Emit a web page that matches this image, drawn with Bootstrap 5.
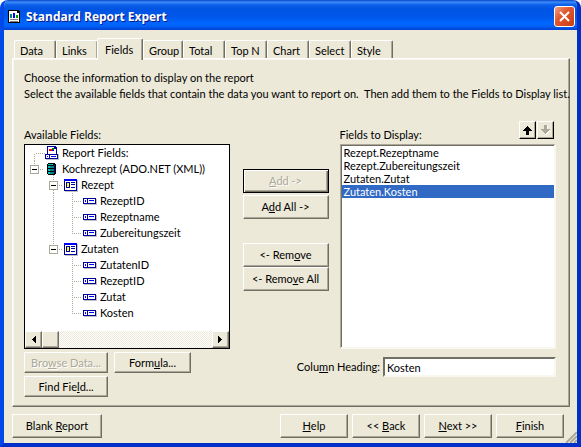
<!DOCTYPE html>
<html lang="en">
<head>
<meta charset="utf-8">
<meta name="viewport" content="width=device-width, initial-scale=1">
<title>Standard Report Expert</title>
<link href="https://cdn.jsdelivr.net/npm/bootstrap@5.3.0/dist/css/bootstrap.min.css" rel="stylesheet">
<style>
:root { --face:#ece9d8; --shade:#aca899; --dark:#716f64; --pick:#316ac5; }
body { font-family:Lato,"Liberation Sans",Arial,sans-serif; font-size:11px; line-height:16px; color:#000; background:#fff; }
.win { min-height:100vh; border:solid; border-width:0 4px 4px; border-color:#0048e8 #0030c8 #0030c8 #0048e8; border-radius:8px 8px 0 0; background:var(--face); overflow:hidden; }
.titlebar { height:30px; margin:0 -4px; padding:3px 6px 0 8px; background:linear-gradient(#0842c8 0,#3b8cf8 2px,#0a5ee8 5px,#0054e3 9px,#0056e8 16px,#0066ff 23px,#0062f8 26px,#003fd0 30px); }
.titlebar h1 { font-family:"Open Sans","Trebuchet MS",sans-serif; font-size:12px; line-height:20px; font-weight:700; color:#fff; text-shadow:1px 1px #0a1883; padding-left:6px; }
.close-btn { width:21px; height:21px; border:1px solid #fff; border-radius:3px; background:linear-gradient(135deg,#f0a088,#e25830 40%,#c83c10); line-height:0; }
.client { padding:8px 7px 5px 8px; }
.nav-tabs { --bs-nav-tabs-border-width:0px; padding-left:2px; height:20px; position:relative; z-index:1; }
.nav-tabs .nav-link { width:42px; height:18px; padding:0 0 0 5px; margin:0; text-align:left; line-height:19px; color:#000; background:var(--face); border:solid; border-width:1px 1px 0 1px; border-color:#fff var(--dark) #fff #fff; border-radius:2px 2px 0 0; box-shadow:inset -1px 0 var(--shade); white-space:nowrap; }
.nav-tabs .nav-link:hover { border-color:#fff var(--dark) #fff #fff; }
.nav-tabs .nav-link.active { width:46px; height:22px; margin-bottom:-2px; margin-left:-1px; padding-left:7px; line-height:19px; color:#000; background:var(--face); border-color:#fff var(--dark) #fff #fff; }
.nav-tabs .nav-link.short { width:40px; }
.sheet { border:1px solid; border-color:#fff var(--dark) var(--dark) #fff; box-shadow:inset -1px -1px var(--shade),inset 1px 1px #f8f7f0; padding:11px 13px 9px 11px; }
.columns { gap:11px; padding-top:19px; }
.col-tree { flex:206 1 0; min-width:0; padding-top:6px; }
.col-move { flex:0 0 86px; padding-top:48px; margin-left:2px; }
.col-list { flex:217 1 0; min-width:0; }
.list-head { height:23px; padding-right:2px; gap:1px; }
.list-head span { padding-top:6px; }
.face-btn { font-size:11px; line-height:16px; color:#000; background:var(--face); border:1px solid; border-color:#fff var(--dark) var(--dark) #fff; box-shadow:inset -1px -1px var(--shade); border-radius:0; padding:0 4px; height:24px; white-space:nowrap; }
.face-btn:hover { color:#000; background:#f1efe2; border-color:#fff var(--dark) var(--dark) #fff; }
.face-btn:disabled { color:var(--shade); text-shadow:1px 1px #fff; background:var(--face); border-color:#fff var(--dark) var(--dark) #fff; opacity:1; }
.face-btn.default-btn { border-color:#000; box-shadow:inset 1px 1px #fff,inset -1px -1px var(--dark),inset -2px -2px var(--shade); }
.face-btn u, label u { text-underline-offset:1px; text-decoration-thickness:1px; }
.stack { gap:2px; }
.low { height:21px; }
.under-tree { gap:6px; padding:3px 0; }
.w-a { width:84px; } .w-b { width:77px; } .w-c { width:90px; } .w-d { width:68px; }
.arrow-btn { width:17px; height:18px; padding:0; border:1px solid; border-color:#fff #000 #000 #fff; background:var(--face); box-shadow:inset -1px -1px var(--shade); line-height:0; }
.tree { background:#fff; border:1px solid #000; margin-top:1px; }
.tree li { height:16px; display:flex; white-space:nowrap; }
.tree li svg { flex:none; }
svg { display:block; shape-rendering:crispEdges; }
.hbar { height:17px; background:repeating-conic-gradient(#fff 0 25%,var(--face) 0 50%) 0 0/2px 2px; }
.hbar button, .hbar span { width:17px; height:17px; padding:0; border:1px solid; border-color:#fff var(--dark) var(--dark) #fff; box-shadow:inset -1px -1px var(--shade); background:var(--face); }
.chosen { background:#fff; border:solid; border-color:var(--shade) #f8f7f0 #f8f7f0 var(--shade); box-shadow:inset 1px 1px var(--dark); padding:1px 0 0 1px; border-width:1px 2px 2px 1px; }
.chosen .list-group-item { padding:0 2px; border:0; font-size:11px; line-height:13px; height:13px; color:#000; background:transparent; border-radius:0; }
.chosen .list-group-item.active { margin:0; color:#fff; background:var(--pick); }
.heading-row { padding-top:8px; height:48px; }
.heading-box { flex:0 0 173px; height:20px; min-height:0; min-width:0; padding:0 2px; border:2px solid; border-color:var(--dark) #f8f7f0 #f8f7f0 var(--dark); border-radius:0; font-size:11px; line-height:16px; color:#000; background:#fff; }
.heading-row label { padding-top:2px; margin-right:3px; }
.foot { padding:7px 6px 0 0; }
.grip { position:absolute; right:0; bottom:0; }
</style>
<script src="https://cdn.jsdelivr.net/npm/bootstrap@5.3.0/dist/js/bootstrap.bundle.min.js"></script>
</head>
<body>
<svg width="0" height="0" class="position-absolute" aria-hidden="true">
  <symbol id="fieldIcon" viewBox="0 0 14 7"><path d="M1 6h12V1h1v6H1z" fill="#c0c0c0"/><path d="M0 0h13v6H0z" fill="#0000a0"/><path d="M1 1h3v4H1zM5 1h7v4H5z" fill="#fff"/><path d="M2 2h1v2H2zM6 2h5v1H6z" fill="#0000ff"/></symbol>
  <symbol id="tableIcon" viewBox="0 0 14 13"><path d="M1 12h12V1h1v12H1z" fill="#c0c0c0"/><path d="M0 0h13v12H0z" fill="#0000a0"/><path d="M0 0h13v2H0z" fill="#0000ff"/><path d="M1 2h11v9H1z" fill="#fff"/><path d="M2 3h4v6H2zM7 3h4v1H7zM7 5h4v1H7zM7 8h4v1H7z" fill="#0000a0"/><path d="M3 4h2v4H3z" fill="#ffff00"/></symbol>
  <symbol id="minusBox" viewBox="0 0 9 9"><path d="M.5 .5h8v8h-8z" fill="#fff" stroke="#aca899"/><path d="M2 4h5v1H2z" fill="#000"/></symbol>
  <symbol id="leafRow" viewBox="0 0 75 16"><path d="M47.500 0v9M49 8.500h7" stroke="#aca899" stroke-dasharray="1 1"/><use href="#fieldIcon" x="58" y="5" width="14" height="7"/></symbol>
</svg>
<main class="win d-flex flex-column">
  <header class="titlebar d-flex align-items-center">
    <svg width="12" height="13" aria-hidden="true"><path d="M0 0h10l2 2v11H0z" fill="#000"/><path d="M1 1h8v2h2v9H1z" fill="#fff"/><path d="M2 4h2v4H2z" fill="#008080"/><path d="M5 3h2v5H5z" fill="#0000ff"/><path d="M8 5h2v3H8z" fill="#00a000"/><path d="M2 9h8v1H2zM2 11h8v1H2z" fill="#808080"/></svg>
    <h1 class="m-0 flex-grow-1">Standard Report Expert</h1>
    <button class="close-btn d-flex align-items-center justify-content-center p-0" aria-label="Close"><svg width="11" height="11" style="shape-rendering:auto"><path d="M1 1l9 9M10 1l-9 9" stroke="#fff" stroke-width="2"/></svg></button>
  </header>
  <div class="client flex-grow-1 d-flex flex-column position-relative">
    <nav class="nav nav-tabs flex-nowrap align-items-end">
      <button class="nav-link">Data</button><button class="nav-link">Links</button><button class="nav-link active" aria-current="page">Fields</button><button class="nav-link short">Group</button><button class="nav-link">Total</button><button class="nav-link">Top N</button><button class="nav-link">Chart</button><button class="nav-link">Select</button><button class="nav-link">Style</button>
    </nav>
    <section class="sheet flex-grow-1 d-flex flex-column">
      <p class="m-0">Choose the information to display on the report</p>
      <p class="m-0 text-nowrap">Select the available fields that contain the data you want to report on.&nbsp; Then add them to the Fields to Display list.</p>
      <div class="columns d-flex flex-grow-1">
        <div class="col-tree d-flex flex-column">
          <div id="availLabel">Available Fields:</div>
          <div class="tree flex-grow-1 d-flex flex-column">
            <ul class="list-unstyled m-0 flex-grow-1" aria-labelledby="availLabel">
              <li><svg width="37" height="16"><path d="M9.500 16V8M11 8.500h9" stroke="#aca899" stroke-dasharray="1 1"/><path d="M22 1h8l2 2v7H22z" fill="#0000a0"/><path d="M23 2h6v2h2v6h-8z" fill="#fff"/><path d="M24 4h3v2h-3z" fill="#f00"/><path d="M27 3h2v2h-2z" fill="#008000"/><path d="M27 5h2v1h-2z" fill="#00f"/><path d="M21 14h12v-5h1v6H21z" fill="#c0c0c0"/><path d="M20 9h13v5H20z" fill="#0000a0"/><path d="M21 10h3v3h-3zM25 10h7v3h-7z" fill="#fff"/><path d="M22 11h1v1h-1zM26 11h5v1h-5z" fill="#00f"/></svg>Report Fields:</li>
              <li><svg width="37" height="16"><path d="M9.500 0v4M15 8.500h4M28.500 14v2" stroke="#aca899" stroke-dasharray="1 1"/><use href="#minusBox" x="5" y="4" width="9" height="9"/><path d="M23 2h7v1h1v10h-1v1h-7v-1h-1V3h1z" fill="#000"/><path d="M23 3h5v1h-5zM23 5h2v2h-2zM23 8h2v2h-2zM23 11h2v2h-2z" fill="#00c0c0"/><path d="M25 5h4v2h-4zM25 8h4v2h-4zM25 11h4v2h-4z" fill="#008080"/><path d="M29 4h1v8h-1z" fill="#000080"/></svg>Kochrezept (ADO.NET (XML))</li>
              <li><svg width="56" height="16"><path d="M28.500 0v4M28.500 13v3M34 8.500h4M47.500 14v2" stroke="#aca899" stroke-dasharray="1 1"/><use href="#minusBox" x="24" y="4" width="9" height="9"/><use href="#tableIcon" x="39" y="2" width="14" height="13"/></svg>Rezept</li>
              <li><svg width="75" height="16"><path d="M28.500 0v16M47.500 10v6" stroke="#aca899" stroke-dasharray="1 1"/><use href="#leafRow" width="75" height="16"/></svg>RezeptID</li>
              <li><svg width="75" height="16"><path d="M28.500 0v16M47.500 10v6" stroke="#aca899" stroke-dasharray="1 1"/><use href="#leafRow" width="75" height="16"/></svg>Rezeptname</li>
              <li><svg width="75" height="16"><path d="M28.500 0v16" stroke="#aca899" stroke-dasharray="1 1"/><use href="#leafRow" width="75" height="16"/></svg>Zubereitungszeit</li>
              <li><svg width="56" height="16"><path d="M28.500 0v4M34 8.500h4M47.500 14v2" stroke="#aca899" stroke-dasharray="1 1"/><use href="#minusBox" x="24" y="4" width="9" height="9"/><use href="#tableIcon" x="39" y="2" width="14" height="13"/></svg>Zutaten</li>
              <li><svg width="75" height="16"><path d="M47.500 10v6" stroke="#aca899" stroke-dasharray="1 1"/><use href="#leafRow" width="75" height="16"/></svg>ZutatenID</li>
              <li><svg width="75" height="16"><path d="M47.500 10v6" stroke="#aca899" stroke-dasharray="1 1"/><use href="#leafRow" width="75" height="16"/></svg>RezeptID</li>
              <li><svg width="75" height="16"><path d="M47.500 10v6" stroke="#aca899" stroke-dasharray="1 1"/><use href="#leafRow" width="75" height="16"/></svg>Zutat</li>
              <li><svg width="75" height="16"><use href="#leafRow" width="75" height="16"/></svg>Kosten</li>
            </ul>
            <div class="hbar d-flex">
              <button class="d-flex align-items-center justify-content-center" aria-label="Scroll left"><svg width="4" height="7"><path d="M3 0h1v7H3V6H2V5H1V4H0V3h1V2h1V1h1z"/></svg></button>
              <span></span>
              <button class="ms-auto d-flex align-items-center justify-content-center" aria-label="Scroll right"><svg width="4" height="7"><path d="M1 0H0v7h1V6h1V5h1V4h1V3H3V2H2V1H1z"/></svg></button>
            </div>
          </div>
          <div class="under-tree d-flex align-items-start">
            <button class="btn face-btn low w-a" disabled>Bro<u>w</u>se Data...</button>
            <button class="btn face-btn low w-b">Form<u>u</u>la...</button>
          </div>
          <button class="btn face-btn low w-a align-self-start">Find Fie<u>l</u>d...</button>
        </div>
        <div class="col-move">
          <div class="stack d-flex flex-column">
            <button class="btn face-btn default-btn" disabled><u>A</u>dd -&gt;</button>
            <button class="btn face-btn">A<u>d</u>d All -&gt;</button>
          </div>
          <div class="d-flex flex-column pt-4">
            <button class="btn face-btn">&lt;- Rem<u>o</u>ve</button>
            <button class="btn face-btn">&lt;- Remo<u>v</u>e All</button>
          </div>
        </div>
        <div class="col-list d-flex flex-column">
          <div class="list-head d-flex align-items-start">
            <span id="shownLabel" class="flex-grow-1">Fields to Display:</span>
            <button class="arrow-btn d-flex align-items-center justify-content-center" aria-label="Move up"><svg width="9" height="9"><path d="M4 0h1v1h1v1h1v1h1v1h1v1H6v4H3V5H0V4h1V3h1V2h1V1h1z"/></svg></button>
            <button class="arrow-btn d-flex align-items-center justify-content-center" aria-label="Move down" disabled><svg width="9" height="10"><path d="M4 10h2V9h1V8h1V7h1V6H7V1H4z" fill="#fff"/><path d="M4 9h1V8h1V7h1V6h1V5h1V4H6V0H3v4H0v1h1v1h1v1h1v1h1z" fill="#aca899"/></svg></button>
          </div>
          <div class="chosen list-group rounded-0 flex-grow-1" aria-labelledby="shownLabel">
            <button class="list-group-item list-group-item-action">Rezept.Rezeptname</button>
            <button class="list-group-item list-group-item-action">Rezept.Zubereitungszeit</button>
            <button class="list-group-item list-group-item-action">Zutaten.Zutat</button>
            <button class="list-group-item list-group-item-action active">Zutaten.Kosten</button>
          </div>
          <div class="heading-row d-flex align-items-start justify-content-end">
            <label for="colHeading" class="text-nowrap">Colu<u>m</u>n Heading:</label>
            <input id="colHeading" class="form-control heading-box" value="Kosten">
          </div>
        </div>
      </div>
    </section>
    <footer class="foot d-flex gap-1">
      <button class="btn face-btn w-c me-auto">Blank <u>R</u>eport</button>
      <button class="btn face-btn w-d"><u>H</u>elp</button>
      <button class="btn face-btn w-d">&lt;&lt; <u>B</u>ack</button>
      <button class="btn face-btn w-d"><u>N</u>ext &gt;&gt;</button>
      <button class="btn face-btn w-d"><u>F</u>inish</button>
    </footer>
    <svg class="grip" width="12" height="12" style="shape-rendering:auto"><path d="M0 12L12 0M4 12l8-8M8 12l4-4" stroke="#fff"/><path d="M1 12L12 1M5 12l7-7M9 12l3-3" stroke="#aca899" stroke-width="2"/></svg>
  </div>
</main>
</body>
</html>
